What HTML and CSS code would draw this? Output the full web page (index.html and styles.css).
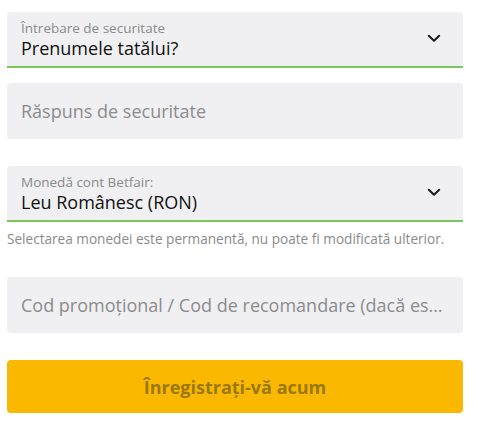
FILE: index.html
```html
<!DOCTYPE html>
<html lang="ro">
<head>
<meta charset="utf-8">
<link rel="stylesheet" href="styles.css">
</head>
<body>
<form class="form">
  <div class="field select">
    <div class="field-text">
      <span class="label">Întrebare de securitate</span>
      <span class="value">Prenumele tatălui?</span>
    </div>
    <svg class="chevron" width="14" height="9" viewBox="0 0 14 9"><path d="M1.8 1.8 L7 6.8 L12.2 1.8" fill="none" stroke="#1a1a1a" stroke-width="2" stroke-linecap="round" stroke-linejoin="round"/></svg>
  </div>
  <div class="field input gap-small">
    <span class="placeholder">Răspuns de securitate</span>
  </div>
  <div class="field select gap-large">
    <div class="field-text">
      <span class="label">Monedă cont Betfair:</span>
      <span class="value">Leu Românesc (RON)</span>
    </div>
    <svg class="chevron" width="14" height="9" viewBox="0 0 14 9"><path d="M1.8 1.8 L7 6.8 L12.2 1.8" fill="none" stroke="#1a1a1a" stroke-width="2" stroke-linecap="round" stroke-linejoin="round"/></svg>
  </div>
  <p class="helper">Selectarea monedei este permanentă, nu poate fi modificată ulterior.</p>
  <div class="field input gap-promo">
    <span class="placeholder">Cod promoțional / Cod de recomandare (dacă este cazul)</span>
  </div>
  <button type="button" class="submit">Înregistrați-vă acum</button>
</form>
</body>
</html>
```

FILE: styles.css
```css
* { box-sizing: border-box; }
html, body { margin: 0; padding: 0; background: #ffffff; }
body {
  font-family: "Open Sans", "Liberation Sans", sans-serif;
  color: #1a1a1a;
}
.form {
  display: flex;
  flex-direction: column;
  padding: 12px 15px 0 7px;
}
.field {
  height: 56px;
  background: #f0f0f2;
  border-radius: 4px;
  display: flex;
  align-items: center;
}
.select {
  justify-content: space-between;
  padding: 0 22px 0 14px;
  border-bottom: 2px solid #7cc65e;
  border-radius: 4px 4px 0 0;
}
.field-text {
  display: flex;
  flex-direction: column;
  padding-top: 2px;
}
.label {
  font-size: 13.5px;
  line-height: 17px;
  color: #8a8a8a;
}
.value {
  font-size: 18px;
  line-height: 23px;
  color: #111111;
}
.chevron { display: block; margin-top: -1px; }
.input { padding: 0 14px; }
.placeholder {
  font-size: 18px;
  color: #8c8c8c;
  white-space: nowrap;
  overflow: hidden;
  text-overflow: ellipsis;
}
.gap-small { margin-top: 15px; }
.gap-large { margin-top: 27px; }
.gap-promo { margin-top: 29px; }
.helper {
  margin: 8px 0 0 0;
  font-size: 13.6px;
  line-height: 18px;
  color: #8a8a8a;
  white-space: nowrap;
}
.submit {
  margin-top: 27px;
  height: 53px;
  border: none;
  border-radius: 4px;
  background: #fbb800;
  color: #9a7812;
  font-family: "Open Sans", "Liberation Sans", sans-serif;
  font-weight: 700;
  font-size: 18px;
}
```
